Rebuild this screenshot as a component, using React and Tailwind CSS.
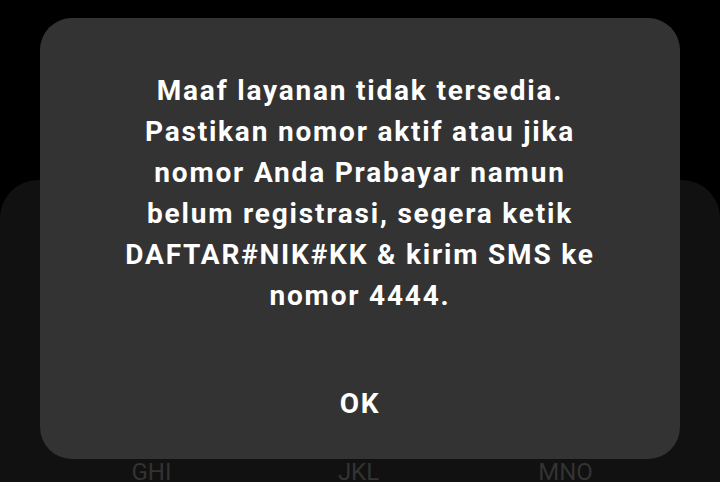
export default function App() {
  return (
    <div className="relative w-[720px] h-[482px] bg-black overflow-hidden flex flex-col" style={{ fontFamily: "Roboto, 'Noto Sans', sans-serif" }}>
      <div className="mt-[180px] flex-1 bg-[#111111] rounded-t-[38px] flex flex-col">
        <div className="mt-[280px] pl-[48px] grid grid-cols-[207px_207px_207px] text-[24px] text-[#333333] leading-none text-center">
          <span>GHI</span>
          <span>JKL</span>
          <span>MNO</span>
        </div>
      </div>
      <div className="absolute left-[40px] top-[18px] w-[640px] h-[441px] bg-[#333333] rounded-[32px] flex flex-col items-center">
        <p className="mt-[52px] text-white font-bold text-[28px] tracking-[1.8px] leading-[41px] text-center w-[600px]">
          Maaf layanan tidak tersedia.<br />
          Pastikan nomor aktif atau jika<br />
          nomor Anda Prabayar namun<br />
          belum registrasi, segera ketik<br />
          DAFTAR#NIK#KK &amp; kirim SMS ke<br />
          nomor 4444.
        </p>
        <button className="mt-[67px] text-white font-bold text-[28px] tracking-[1.8px] leading-[41px]">OK</button>
      </div>
    </div>
  );
}
